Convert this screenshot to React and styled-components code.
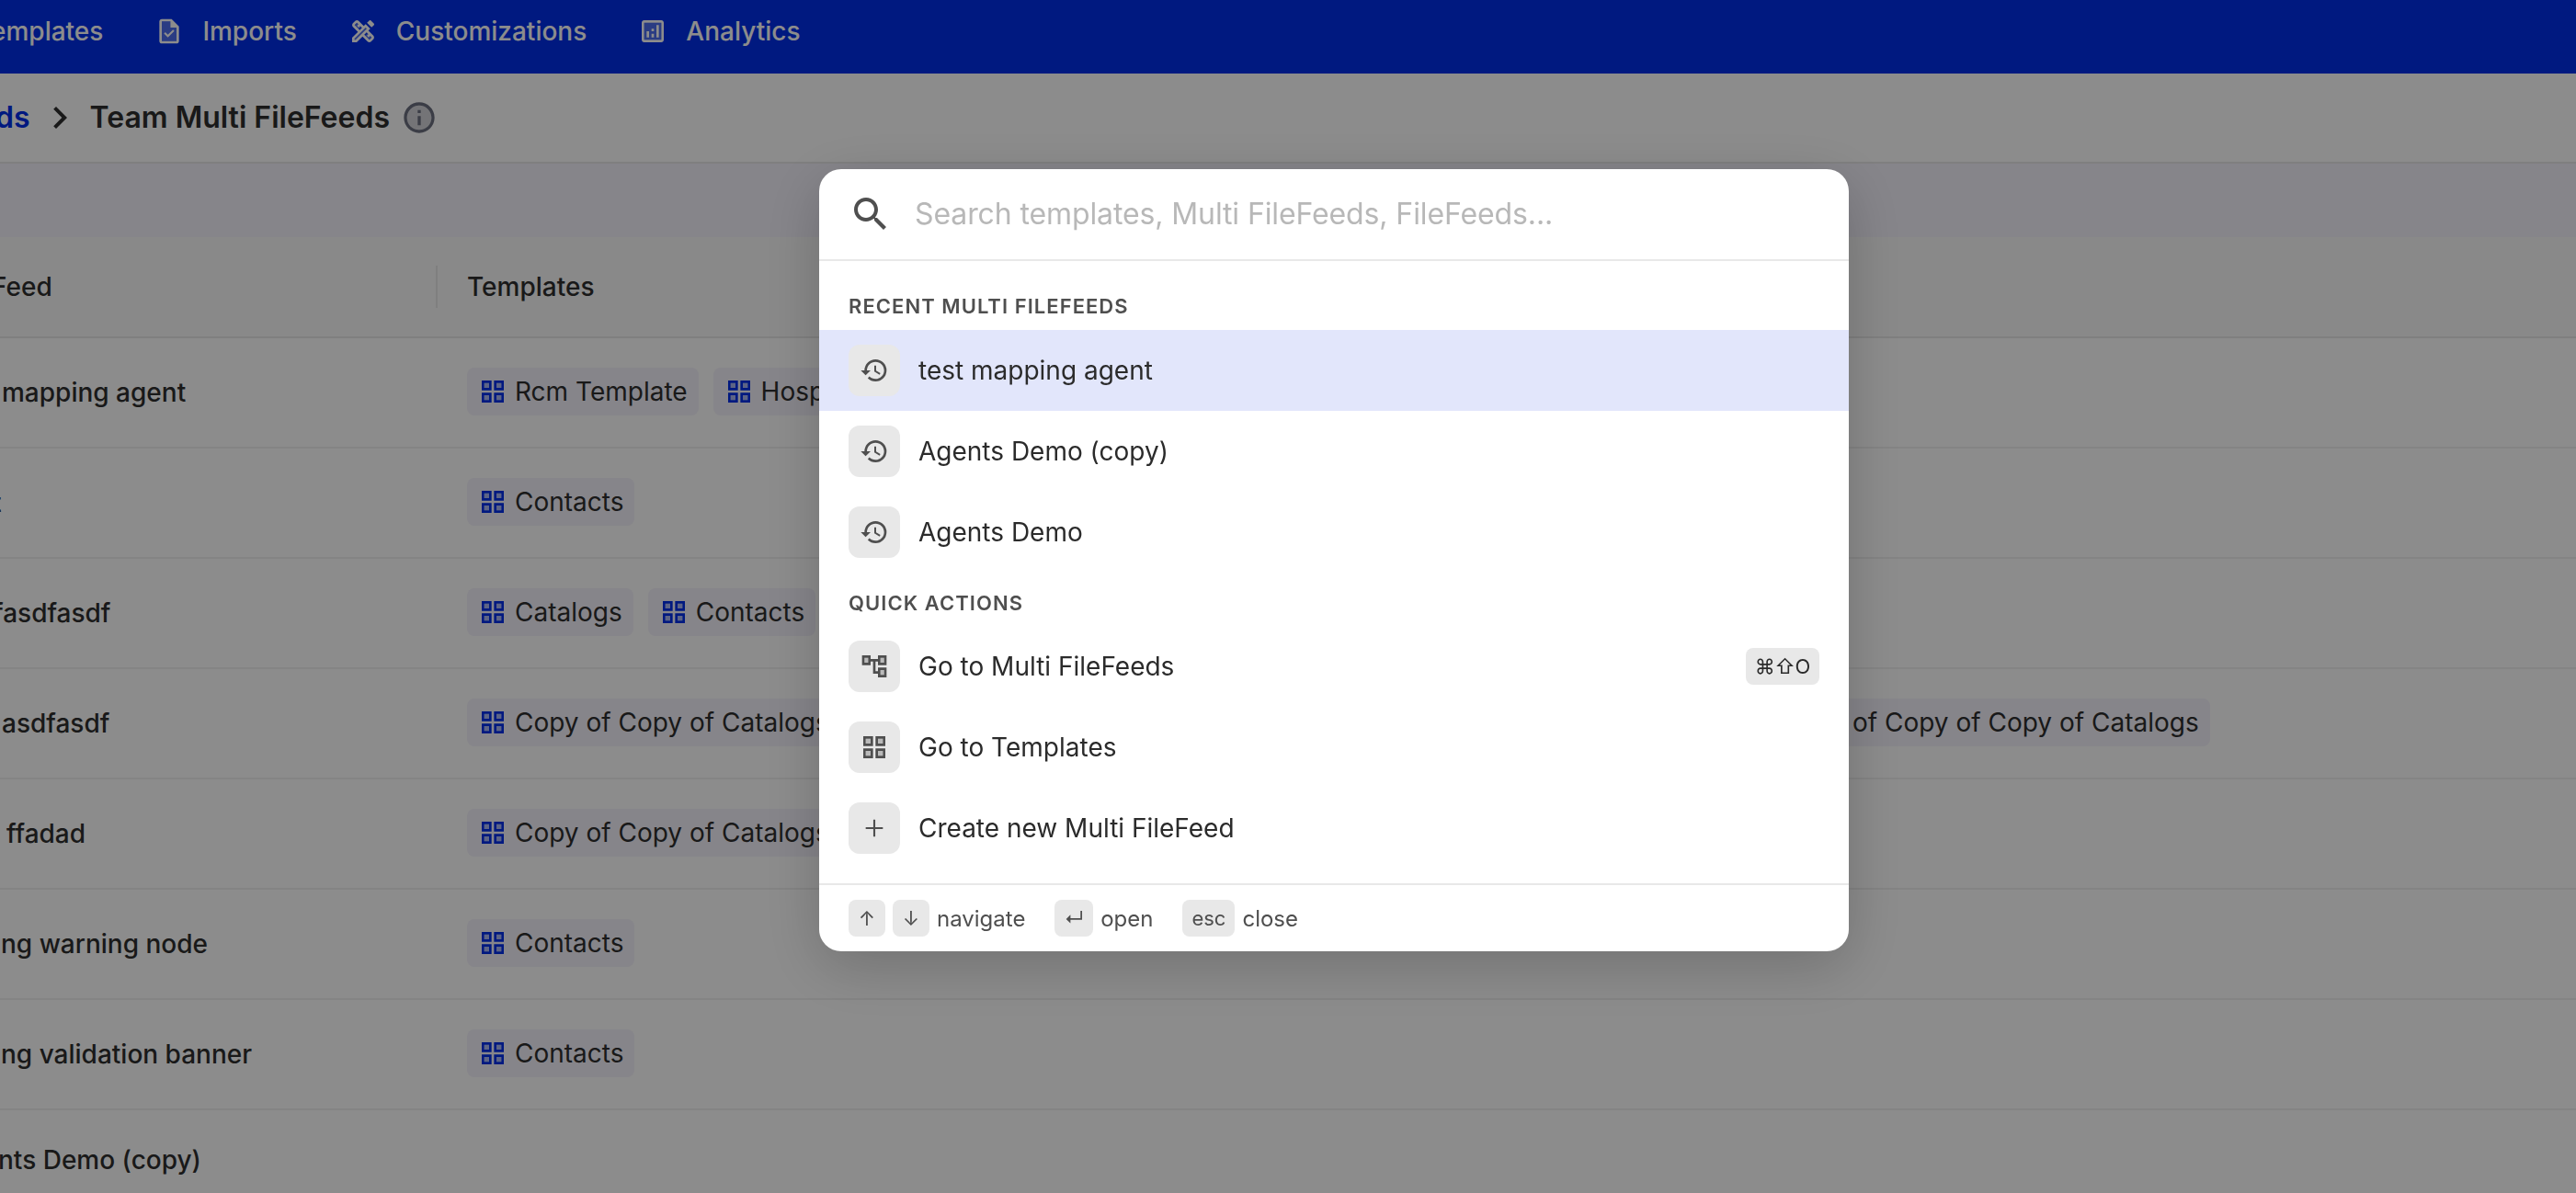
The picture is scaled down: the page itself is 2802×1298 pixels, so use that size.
import React from 'react';
import styled, { createGlobalStyle } from 'styled-components';

const NAV = [
  { label: 'Imports', icon: 'task' },
  { label: 'Customizations', icon: 'design' },
  { label: 'Analytics', icon: 'analytics' },
];

// the page is scrolled sideways, so the names are cut by the left edge
const ROWS = [
  { name: 'mapping agent', shift: 2, tags: ['Rcm Template', 'Hospital'] },
  { name: 't', shift: -8, tags: ['Contacts'] },
  { name: 'fasdfasdf', shift: -7, tags: ['Catalogs', 'Contacts'] },
  { name: 'asdfasdf', shift: 2, tags: ['Copy of Copy of Catalogs', 'Copy of Copy of Catalogs', 'Copy of Copy of Copy of Catalogs', 'Copy of Copy of Copy of Catalogs'] },
  { name: 'ffadad', shift: 7, tags: ['Copy of Copy of Catalogs'] },
  { name: 'ng warning node', shift: 1, tags: ['Contacts'] },
  { name: 'ng validation banner', shift: 1, tags: ['Contacts'] },
  { name: 'nts Demo (copy)', shift: -2, tags: [] },
];

const RECENT = ['test mapping agent', 'Agents Demo (copy)', 'Agents Demo'];

const ACTIONS = [
  { label: 'Go to Multi FileFeeds', icon: 'tree', keys: '⌘⇧O' },
  { label: 'Go to Templates', icon: 'grid' },
  { label: 'Create new Multi FileFeed', icon: 'plus' },
];

// two tone icons: "soft" is the pale inner shape
const ICONS = {
  task: {
    soft: 'M13 4H6v16h12V9h-5V4z',
    main: 'M14 2H6c-1.1 0-2 .9-2 2v16c0 1.1.9 2 2 2h12c1.1 0 2-.9 2-2V8l-6-6zm4 18H6V4h7v5h5v11zM10.94 17.06l-3.18-3.18 1.1-1.1 2.08 2.08 4.2-4.2 1.1 1.1z',
  },
  design: {
    soft: 'M5 19h1.42l9.1-9.1-1.42-1.42L5 17.58zM7.41 5L5 7.41l3.18 3.18 2.41-2.41zM16.59 19L19 16.59l-3.18-3.18-2.41 2.41z',
    main: 'M16.24 11.51l1.57-1.57-3.75-3.75-1.57 1.57-4.14-4.13c-.78-.78-2.05-.78-2.83 0l-1.9 1.9c-.78.78-.78 2.05 0 2.83l4.13 4.13L3 17.25V21h3.75l4.76-4.76 4.13 4.13c.95.95 2.23.6 2.83 0l1.9-1.9c.78-.78.78-2.05 0-2.83l-4.13-4.13zm-7.06-.44L5.04 6.94l1.89-1.9L8.2 6.31 7.02 7.5l1.41 1.41 1.19-1.19 1.45 1.45-1.89 1.9zm7.88 7.89l-4.13-4.13 1.9-1.9 1.45 1.45-1.19 1.19 1.41 1.41 1.19-1.19 1.27 1.27-1.9 1.9zM20.71 7.04a.996.996 0 000-1.41l-2.34-2.34c-.47-.47-1.12-.29-1.41 0l-1.83 1.83 3.75 3.75 1.83-1.83zM5.92 19H5v-.92l9.06-9.06.92.92L5.92 19z',
  },
  analytics: {
    soft: 'M5 19h14V5H5v14z',
    main: 'M19 3H5c-1.1 0-2 .9-2 2v14c0 1.1.9 2 2 2h14c1.1 0 2-.9 2-2V5c0-1.1-.9-2-2-2zm0 16H5V5h14v14zM7 12h2v5H7zM15 7h2v10h-2zM11 14h2v3h-2zM11 10h2v2h-2z',
  },
  info: {
    soft: 'M12 4c-4.41 0-8 3.59-8 8s3.59 8 8 8 8-3.59 8-8-3.59-8-8-8z',
    main: 'M11 7h2v2h-2zm0 4h2v6h-2zm1-9C6.48 2 2 6.48 2 12s4.48 10 10 10 10-4.48 10-10S17.52 2 12 2zm0 18c-4.41 0-8-3.59-8-8s3.59-8 8-8 8 3.59 8 8-3.59 8-8 8z',
  },
  grid: {
    soft: 'M5 5h4v4H5zm10 10h4v4h-4zM5 15h4v4H5zM15 5h4v4h-4z',
    main: 'M3 11h8V3H3v8zm2-6h4v4H5V5zm8-2v8h8V3h-8zm6 6h-4V5h4v4zM3 21h8v-8H3v8zm2-6h4v4H5v-4zm8 6h8v-8h-8v8zm2-6h4v4h-4v-4z',
  },
  tree: {
    soft: 'M17 5h3v4h-3zM4 5h3v4H4zm13 10h3v4h-3z',
    main: 'M22 11V3h-7v3H9V3H2v8h7V8h2v10h4v3h7v-8h-7v3h-2V8h2v3h7zM7 9H4V5h3v4zm10 6h3v4h-3v-4zm0-10h3v4h-3V5z',
  },
  history: {
    main: 'M13 3a9 9 0 00-9 9H1l3.89 3.89.07.14L9 12H6c0-3.87 3.13-7 7-7s7 3.13 7 7-3.13 7-7 7c-1.93 0-3.68-.79-4.94-2.06l-1.42 1.42A8.954 8.954 0 0013 21a9 9 0 000-18zm-1 5v5l4.28 2.54.72-1.21-3.5-2.08V8H12z',
  },
  plus: { main: 'M19 12.8h-6.2V19h-1.6v-6.2H5v-1.6h6.2V5h1.6v6.2H19z' },
  search: {
    main: 'M15.5 14h-.79l-.28-.27C15.41 12.59 16 11.11 16 9.5 16 5.91 13.09 3 9.5 3S3 5.91 3 9.5 5.91 16 9.5 16c1.61 0 3.09-.59 4.23-1.57l.27.28v.79l5 4.99L20.49 19l-4.99-5zm-6 0C7.01 14 5 11.99 5 9.5S7.01 5 9.5 5 14 7.01 14 9.5 11.99 14 9.5 14z',
  },
  chevron: { main: 'M10 6L8.59 7.41 13.17 12l-4.58 4.59L10 18l6-6z' },
};

const Icon = ({ name, size = 32 }) => (
  <Svg viewBox="0 0 24 24" width={size} height={size}>
    {ICONS[name].soft && <path opacity=".3" d={ICONS[name].soft} />}
    <path d={ICONS[name].main} />
  </Svg>
);

const Item = ({ icon, label, keys, active }) => (
  <ItemRow $active={active}>
    <IconBox><Icon name={icon} /></IconBox>
    <ItemLabel>{label}</ItemLabel>
    {keys && <Kbd $dark>{keys}</Kbd>}
  </ItemRow>
);

const App = () => {
  return (
    <>
      <GlobalStyle />
      <Page>
        <NavBar>
          <NavItem $first>emplates</NavItem>
          {NAV.map((n) => (
            <NavItem key={n.label}>
              <Icon name={n.icon} />
              {n.label}
            </NavItem>
          ))}
        </NavBar>
        <Breadcrumb>
          <Crumb>ds</Crumb>
          <Icon name="chevron" size={48} />
          <Title>Team Multi FileFeeds</Title>
          <InfoMark><Icon name="info" size={40} /></InfoMark>
        </Breadcrumb>
        <Band />
        <TableHead>
          <HeadName>Feed</HeadName>
          <HeadTemplates>Templates</HeadTemplates>
        </TableHead>
        {ROWS.map((r) => (
          <Row key={r.name} $short={!r.tags.length}>
            <Name $shift={r.shift}>{r.name}</Name>
            <Tags>
              {r.tags.map((t, i) => (
                <Tag key={i}>
                  <Icon name="grid" />
                  <span>{t}</span>
                </Tag>
              ))}
            </Tags>
          </Row>
        ))}
      </Page>

      {/* command palette over the page */}
      <Overlay>
        <Palette>
          <SearchBar>
            <Icon name="search" size={48} />
            <SearchInput placeholder="Search templates, Multi FileFeeds, FileFeeds..." />
          </SearchBar>
          <Results>
            <Section>Recent Multi FileFeeds</Section>
            {RECENT.map((r, i) => (
              <Item key={r} icon="history" label={r} active={i === 0} />
            ))}
            <Section>Quick actions</Section>
            {ACTIONS.map((a) => (
              <Item key={a.label} {...a} />
            ))}
          </Results>
          <Footer>
            <Hint><Kbd>↑</Kbd><Kbd>↓</Kbd>navigate</Hint>
            <Hint><Kbd>↵</Kbd>open</Hint>
            <Hint><Kbd>esc</Kbd>close</Hint>
          </Footer>
        </Palette>
      </Overlay>
    </>
  );
};

const GlobalStyle = createGlobalStyle`
* { box-sizing: border-box; }
body {
  margin: 0;
  overflow: hidden;
  font-family: Inter, "Liberation Sans", sans-serif;
  -webkit-font-smoothing: antialiased;
}
`;

const Svg = styled.svg`
display: block;
flex: none;
fill: currentColor;
`;

const Page = styled.div`
height: 1298px;
overflow: hidden;
background: #fff;
color: #2f2f2f;
font-size: 28px;
white-space: nowrap;
`;

const NavBar = styled.nav`
display: flex;
gap: 56px;
height: 80px;
padding-bottom: 12px;
align-items: center;
background: #002fe9;
color: #fff;
`;

const NavItem = styled.div`
display: flex;
align-items: center;
gap: 20px;
font-weight: 500;
margin-left: ${(p) => (p.$first ? '-10px' : '0')};
`;

const Breadcrumb = styled.div`
display: flex;
align-items: center;
height: 98px;
border-bottom: 2px solid #e8e8e8;
font-size: 32px;
font-weight: 600;
`;

const Crumb = styled.span`
margin-left: -5px;
margin-right: 8px;
padding-bottom: 1px;
color: #002fe9;
`;

const Title = styled.span`
margin-left: 9px;
padding-bottom: 1px;
`;

const InfoMark = styled.span`
margin-left: 12px;
color: #6c7080;
`;

const Band = styled.div`
height: 80px;
background: #f4f2fb;
`;

const TableHead = styled.div`
display: flex;
align-items: center;
height: 110px;
background: #fafafa;
border-bottom: 2px solid #e8e8e8;
font-weight: 500;
`;

const HeadName = styled.div`
width: 476px;
height: 46px;
line-height: 46px;
border-right: 2px solid #e8e8e8;
text-indent: -9px;
`;

const HeadTemplates = styled.div`
padding-left: 32px;
`;

const Row = styled.div`
display: flex;
align-items: center;
height: ${(p) => (p.$short ? '110px' : '120px')};
border-bottom: 2px solid #f0f0f0;
`;

const Name = styled.div`
flex: none;
width: 508px;
text-indent: ${(p) => p.$shift}px;
font-weight: 500;
`;

const Tags = styled.div`
display: flex;
gap: 16px;
padding-bottom: 2px;
`;

const Tag = styled.div`
display: flex;
align-items: center;
gap: 8px;
height: 52px;
padding: 0 12px;
border-radius: 8px;
background: #f4f2fb;
svg { color: #002fe9; }
span { color: #2f2f2f; }
`;

const Overlay = styled.div`
position: fixed;
inset: 0;
background: rgba(0, 0, 0, 0.45);
`;

const Palette = styled.div`
width: 1120px;
margin: 184px 0 0 891px;
overflow: hidden;
border-radius: 24px;
background: #fff;
box-shadow: 0 16px 64px rgba(0, 0, 0, 0.2);
color: #4f4f4f;
`;

const SearchBar = styled.div`
display: flex;
align-items: center;
gap: 24px;
height: 100px;
padding: 0 32px;
border-bottom: 2px solid #e8e8e8;
`;

const SearchInput = styled.input`
flex: 1;
padding: 0 0 2px;
border: none;
outline: none;
font: 400 32px Inter, "Liberation Sans", sans-serif;
letter-spacing: -0.11px;
&::placeholder { color: #b8b8b8; }
`;

const Results = styled.div`
padding: 16px 0;
`;

const Section = styled.div`
height: 58.5px;
padding: 20px 32px 0;
font-size: 22px;
font-weight: 600;
line-height: 26.5px;
letter-spacing: 1.05px;
text-transform: uppercase;
`;

const ItemRow = styled.div`
display: flex;
align-items: center;
gap: 20px;
height: 88px;
padding: 0 32px;
background: ${(p) => (p.$active ? '#e2e6fb' : 'transparent')};
`;

const IconBox = styled.div`
display: flex;
align-items: center;
justify-content: center;
width: 56px;
height: 56px;
border-radius: 12px;
background: #e8e8e8;
`;

const ItemLabel = styled.span`
flex: 1;
color: #2b2b2b;
font-size: 28px;
`;

const Kbd = styled.kbd`
display: inline-flex;
align-items: center;
justify-content: center;
min-width: 40px;
height: 40px;
padding: 0 10px;
border-radius: 8px;
background: #e8e8e8;
color: ${(p) => (p.$dark ? '#2b2b2b' : '#4f4f4f')};
font: 400 22px Inter, "DejaVu Sans", sans-serif;
letter-spacing: ${(p) => (p.$dark ? '-0.4px' : 'normal')};
`;

const Footer = styled.div`
display: flex;
gap: 32px;
padding: 16px 32px;
border-top: 2px solid #e8e8e8;
`;

const Hint = styled.div`
display: flex;
align-items: center;
gap: 8px;
font-size: 24px;
`;

export default App;
